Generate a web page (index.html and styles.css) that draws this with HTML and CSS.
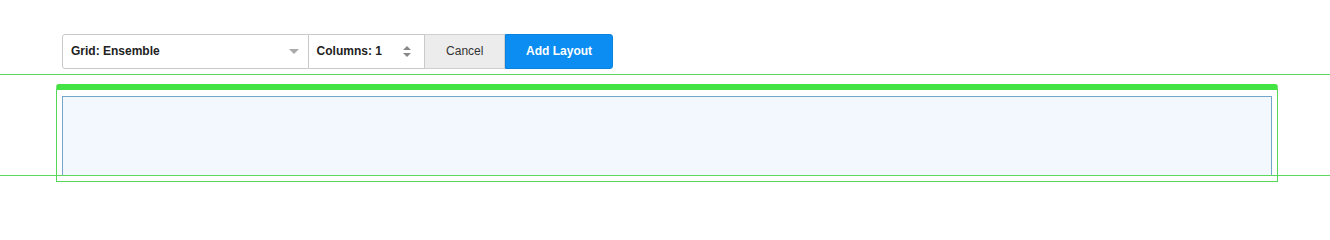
FILE: index.html
```html
<!DOCTYPE html>
<html lang="en">
<head>
    <meta charset="UTF-8">
    <meta name="viewport" content="width=device-width, initial-scale=1.0">
    <title>Layout Builder</title>
    <link rel="stylesheet" href="styles.css">
</head>
<body>
    <div id="toolbar">
        <div class="select-box" id="grid">
            <span class="label">Grid: Ensemble</span>
            <span class="caret"></span>
        </div>
        <div class="select-box" id="columns">
            <span class="label">Columns: 1</span>
            <span class="spinner">
                <span class="up"></span>
                <span class="down"></span>
            </span>
        </div>
        <button class="btn" id="cancel-btn">Cancel</button>
        <button class="btn" id="add-btn">Add Layout</button>
    </div>

    <div id="layout">
        <div id="drop-zone"></div>
    </div>

    <!-- guide lines -->
    <div class="guide" id="guide-top"></div>
    <div class="guide" id="guide-bottom"></div>
</body>
</html>
```

FILE: styles.css
```css
body {
    margin: 0;
    padding: 34px 0 0 56px;
    font-family: "Liberation Sans", Arial, sans-serif;
    font-size: 12px;
    color: #222;
    background-color: #fff;
}

#toolbar {
    display: flex;
    height: 35px;
    margin-left: 6px;
    width: 551px;
}

.select-box {
    display: flex;
    align-items: center;
    justify-content: space-between;
    box-sizing: border-box;
    height: 35px;
    padding: 0 9px 1px 8px;
    background-color: #fff;
    border: 1px solid #c9c9c9;
    font-weight: bold;
}

#grid {
    width: 247px;
    border-radius: 3px 0 0 3px;
}

#columns {
    width: 117px;
    border-left: none;
    padding-right: 13px;
}

.caret {
    width: 0;
    height: 0;
    border-left: 5px solid transparent;
    border-right: 5px solid transparent;
    border-top: 5px solid #aaa;
}

.spinner {
    display: flex;
    flex-direction: column;
    gap: 3px;
}

.spinner .up, .spinner .down {
    width: 0;
    height: 0;
    border-left: 4px solid transparent;
    border-right: 4px solid transparent;
}

.spinner .up {
    border-bottom: 4px solid #888;
}

.spinner .down {
    border-top: 4px solid #888;
}

.btn {
    height: 35px;
    box-sizing: border-box;
    padding: 0 0 2px 0;
    font-family: "Liberation Sans", Arial, sans-serif;
    font-size: 12px;
    cursor: pointer;
}

#cancel-btn {
    width: 80px;
    background-color: #ececec;
    border: 1px solid #cfcfcf;
    border-left: none;
    color: #333;
}

#add-btn {
    width: 108px;
    background-color: #0b8df2;
    border: 1px solid #0a82de;
    border-radius: 0 3px 3px 0;
    color: #fff;
    font-weight: bold;
}

#layout {
    margin-top: 15px;
    width: 1222px;
    box-sizing: border-box;
    padding: 6px 5px 5px 5px;
    border: 1px solid #56d856;
    border-top: 6px solid #42e342;
    border-radius: 3px 3px 0 0;
}

#drop-zone {
    height: 78px;
    background-color: #f3f8fe;
    border: 1px solid #74a6c9;
}

.guide {
    position: absolute;
    left: 0;
    width: 100%;
    height: 1px;
    background-color: #5cd85c;
}

#guide-top {
    top: 74px;
}

#guide-bottom {
    top: 175px;
}
```
